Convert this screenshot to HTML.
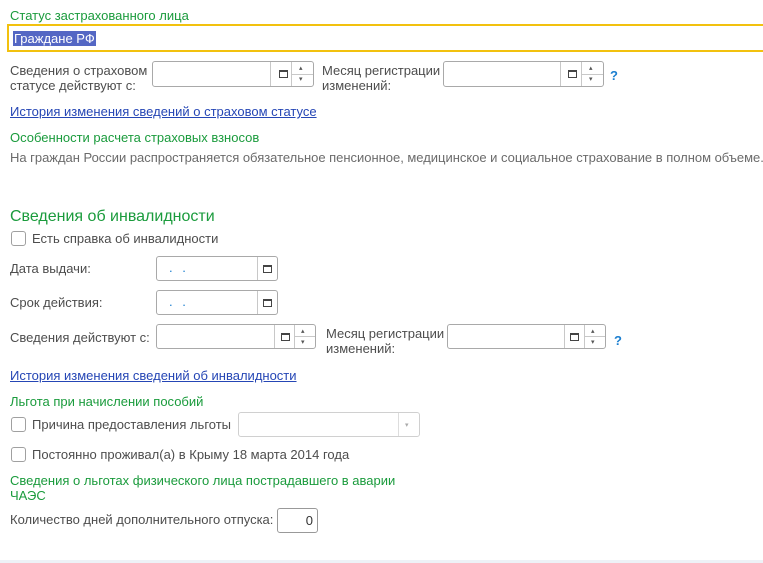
<!DOCTYPE html>
<html><head><meta charset="utf-8"><style>
*{margin:0;padding:0;box-sizing:border-box}
body{width:763px;height:563px;background:#fff;position:relative;overflow:hidden;font-family:"Liberation Sans",Arial,sans-serif;font-size:13px;color:#4d4d4d}
.a{position:absolute;white-space:nowrap;line-height:15px}
.g{color:#1a9b3c}
.l{color:#2546b5;text-decoration:underline}
.in{position:absolute;border:1px solid #a9a9a9;border-radius:3px;background:#fff}
.sep{position:absolute;top:0;bottom:0;border-left:1px solid #c8c8c8}
.cal{position:absolute;width:9px;height:8px;border:1px solid #444;border-top-width:2px;top:50%;margin-top:-4px}
.sp{position:absolute;font-size:7px;color:#555;line-height:7px}
.cb{position:absolute;width:15px;height:15px;border:1px solid #a0a0a0;border-radius:3px;background:#fff}
.q{color:#1c7fd0;font-weight:bold}
.dots{position:absolute;color:#1c7fd0;font-size:13px;top:3px;left:12px;letter-spacing:3px}
</style></head><body>
<div class="a g" style="left:10px;top:8px">Статус застрахованного лица</div>
<div style="position:absolute;left:7px;top:24px;width:760px;height:28px;border:2px solid #f2c10e"></div>
<div class="a" style="left:13px;top:31px;background:#5467c4;color:#fff;padding:0 1px">Граждане РФ</div>

<div class="a" style="left:10px;top:63px">Сведения о страховом<br>статусе действуют с:</div>
<div class="in" style="left:152px;top:61px;width:162px;height:26px"><div class="sep" style="left:117px"></div><div class="cal" style="left:126px"></div><div class="sep" style="left:138px"></div><div style="position:absolute;left:138px;right:0;top:12px;border-top:1px solid #c8c8c8"></div><div class="sp" style="left:146px;top:3px">▴</div><div class="sp" style="left:146px;top:14px">▾</div></div>
<div class="a" style="left:322px;top:63px">Месяц регистрации<br>изменений:</div>
<div class="in" style="left:443px;top:61px;width:161px;height:26px"><div class="sep" style="left:116px"></div><div class="cal" style="left:124px"></div><div class="sep" style="left:137px"></div><div style="position:absolute;left:137px;right:0;top:12px;border-top:1px solid #c8c8c8"></div><div class="sp" style="left:145px;top:3px">▴</div><div class="sp" style="left:145px;top:14px">▾</div></div>
<div class="a q" style="left:610px;top:68px">?</div>

<div class="a l" style="left:10px;top:104px">История изменения сведений о страховом статусе</div>
<div class="a g" style="left:10px;top:130px">Особенности расчета страховых взносов</div>
<div class="a" style="left:10px;top:150px;color:#6b6b6b;letter-spacing:-0.02px">На граждан России распространяется обязательное пенсионное, медицинское и социальное страхование в полном объеме.</div>

<div class="a g" style="left:10px;top:208px;font-size:16px;line-height:18px">Сведения об инвалидности</div>
<div class="cb" style="left:11px;top:231px"></div>
<div class="a" style="left:32px;top:231px">Есть справка об инвалидности</div>

<div class="a" style="left:10px;top:261px">Дата выдачи:</div>
<div class="in" style="left:156px;top:256px;width:122px;height:25px"><div class="dots">. .</div><div class="sep" style="left:100px"></div><div class="cal" style="left:106px"></div></div>
<div class="a" style="left:10px;top:295px">Срок действия:</div>
<div class="in" style="left:156px;top:290px;width:122px;height:25px"><div class="dots">. .</div><div class="sep" style="left:100px"></div><div class="cal" style="left:106px"></div></div>

<div class="a" style="left:10px;top:330px">Сведения действуют с:</div>
<div class="in" style="left:156px;top:324px;width:160px;height:25px"><div class="sep" style="left:117px"></div><div class="cal" style="left:124px"></div><div class="sep" style="left:137px"></div><div style="position:absolute;left:137px;right:0;top:11px;border-top:1px solid #c8c8c8"></div><div class="sp" style="left:144px;top:3px">▴</div><div class="sp" style="left:144px;top:14px">▾</div></div>
<div class="a" style="left:326px;top:326px">Месяц регистрации<br>изменений:</div>
<div class="in" style="left:447px;top:324px;width:159px;height:25px"><div class="sep" style="left:116px"></div><div class="cal" style="left:122px"></div><div class="sep" style="left:136px"></div><div style="position:absolute;left:136px;right:0;top:11px;border-top:1px solid #c8c8c8"></div><div class="sp" style="left:143px;top:3px">▴</div><div class="sp" style="left:143px;top:14px">▾</div></div>
<div class="a q" style="left:614px;top:333px">?</div>

<div class="a l" style="left:10px;top:368px">История изменения сведений об инвалидности</div>
<div class="a g" style="left:10px;top:394px">Льгота при начислении пособий</div>
<div class="cb" style="left:11px;top:417px"></div>
<div class="a" style="left:32px;top:417px">Причина предоставления льготы</div>
<div class="in" style="left:238px;top:412px;width:182px;height:25px;border-color:#d0d0d0"><div class="sep" style="left:159px;border-color:#ddd"></div><div class="sp" style="left:166px;top:9px;color:#aaa">▾</div></div>
<div class="cb" style="left:11px;top:447px"></div>
<div class="a" style="left:32px;top:447px">Постоянно проживал(а) в Крыму 18 марта 2014 года</div>
<div class="a g" style="left:10px;top:473px">Сведения о льготах физического лица пострадавшего в аварии<br>ЧАЭС</div>
<div class="a" style="left:10px;top:512px">Количество дней дополнительного отпуска:</div>
<div class="in" style="left:277px;top:508px;width:41px;height:25px;border-color:#999"><div style="position:absolute;right:4px;top:4px;line-height:15px;color:#333">0</div></div>
<div style="position:absolute;left:0;top:560px;width:763px;height:3px;background:#eef2f7"></div>
</body></html>
